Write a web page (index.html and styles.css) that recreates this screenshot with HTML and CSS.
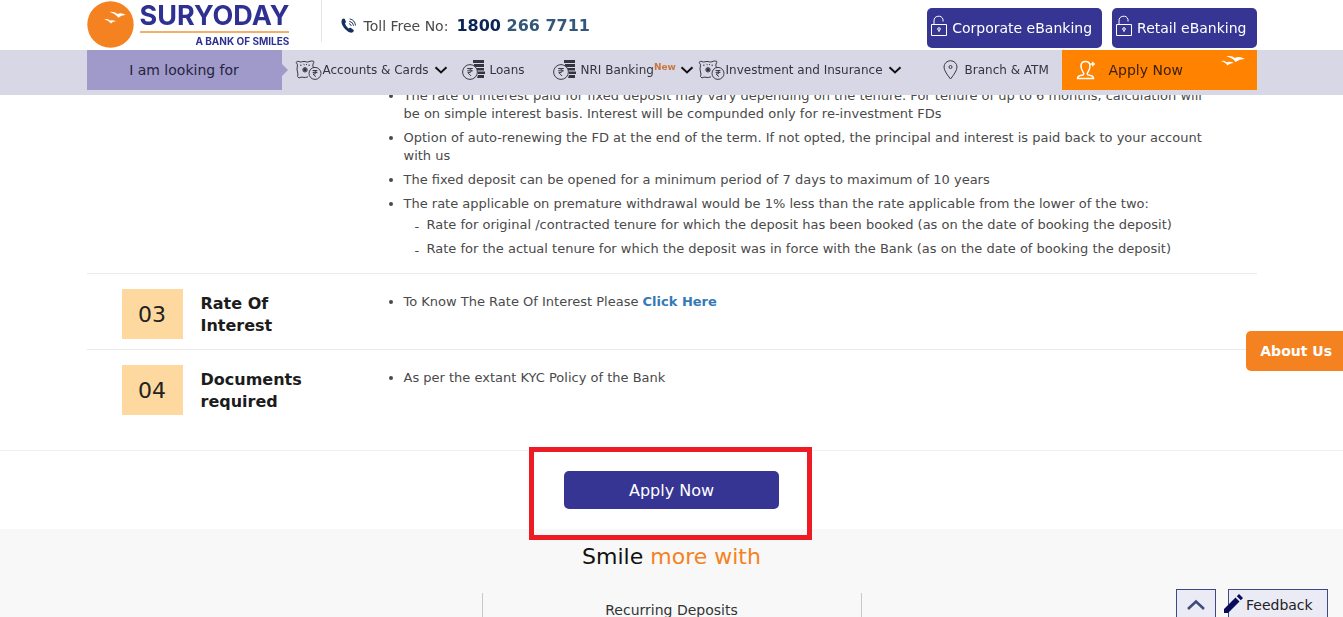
FILE: index.html
```html
<!DOCTYPE html>
<html lang="en">
<head>
    <meta charset="UTF-8" />
    <meta name="viewport" content="width=device-width, initial-scale=1.0"/>
    <title>Fixed Deposit - Suryoday Bank</title>
    <link rel="stylesheet" href="styles.css">
</head>
<body>

<!-- shared icons -->
<svg class="sprite" aria-hidden="true">
    <symbol id="icon-savings" viewBox="0 0 28 20">
        <path d="M1 2.5 Q2 .8 4 1.5 Q5 2.4 7 1.8 Q9 1 11 1.8 Q13 2.5 14 1.6 Q16 .6 18.5 1.2 Q19.5 2 18 4 Q17.5 6 18.5 8 M1 2.5 Q3 4 2.4 6 Q1.5 9 2.5 12 Q3.4 14 2.5 16.5 L4 18 Q6 16.5 8 17.3 Q10 18 13 16.8"/>
        <path d="M5 5.2h1.6M8.5 4.2l1.2.7M12 4.2l-1 .7M15 5.2h-1.6"/>
        <circle cx="10" cy="9.8" r="2.2"/><circle class="solid" cx="10" cy="9.8" r="1.8"/>
        <circle cx="20" cy="13.4" r="6"/>
        <path d="M17.6 10.5h4.8M17.6 12.4h4.8M18 10.5q3.2 0 3.2 1.9t-3.2 1.7l2.9 2.6"/>
    </symbol>
    <symbol id="icon-coins" viewBox="0 0 24 20">
        <path class="solid" d="M11 0h11v3H11zM12 4h10v3H12zM14 8h8v2.5h-8zM16 11.5h7V14h-7zM16 15h6v3h-7z"/>
        <circle class="coin" cx="8" cy="12" r="7.4"/>
        <path d="M5.2 8.5h5.6M5.2 10.8h5.6M5.8 8.5q3.6 0 3.6 2.2t-3.6 2l3.3 3.3"/>
    </symbol>
    <symbol id="icon-chevron" viewBox="0 0 14 8">
        <path class="chevron" d="M1.5 1.2L7 6.4l5.5-5.2"/>
    </symbol>
    <symbol id="icon-lock" viewBox="0 0 18 22">
        <path d="M1.5 9.5h15v11h-15zM4 9.5V6a4.6 4.6 0 0 1 9-1.5v2"/>
        <circle cx="9" cy="14" r="1.3"/><path d="M9 15v2"/>
    </symbol>
    <symbol id="icon-birds" viewBox="0 0 24 12">
        <path d="M5 1.2Q11 .2 14 3Q18 .8 24 4Q19 3.8 14.5 7Q12 2.8 5 1.2zM0 6Q3 5.2 5.5 7.2Q9 5.8 13 8Q8.5 8 6.500 10.5Q4.5 7 0 6z"/>
    </symbol>
</svg>

<header class="site-header">
    <div class="container top-bar">
        <a class="logo" href="#" aria-label="Suryoday home">
            <svg class="logo-sun" viewBox="0 0 46 46">
                <circle cx="23" cy="23" r="22.7"/>
                <path d="M22 10.500q5-.500 8 2.300q3.500-1.800 8 1q-4.500-.200-7.200 2.700q-3-4-8.800-6zM17 17.800q3.500-.500 5.500 1.300q2.500-1 6 .700q-3.500 0-5 2.200q-2-3-6.500-4.200z"/>
            </svg>
            <span class="logo-text">
                <span class="logo-name">SURYODAY</span>
                <span class="logo-tag">A BANK OF SMILES</span>
            </span>
        </a>
        <div class="toll-free">
            <svg class="icon-phone" viewBox="0 0 16 17">
                <path d="M1.5 1.5Q3 .5 4 1.6L5.3 4.5Q5.3 5.5 4.2 6.2Q5 9.5 8 11.7Q9.4 10.7 10.3 11L13.5 13.2Q14 14.5 12.5 15.8Q9 17.2 4.5 12.5Q-1.5 5.5 1.5 1.5z"/>
                <path class="wave" d="M8.5 6.5q2 .3 2.5 2.5M8.8 4q4 .5 4.7 4.8M9.2 1.5q5.5.8 6.3 7"/>
            </svg>
            <span>Toll Free No:</span>
            <a href="tel:18002667711"><b>1800</b> 266 7711</a>
        </div>
        <div class="bank-links">
            <button type="button"><svg class="icon-lock"><use href="#icon-lock"/></svg>Corporate eBanking</button>
            <button type="button"><svg class="icon-lock"><use href="#icon-lock"/></svg>Retail eBanking</button>
        </div>
    </div>
    <nav class="main-nav">
        <div class="container nav-row">
            <a class="looking" href="#">I am looking for</a>
            <div class="nav-items">
                <a href="#"><svg class="icon-savings"><use href="#icon-savings"/></svg>Accounts &amp; Cards<svg class="icon-chevron"><use href="#icon-chevron"/></svg></a>
                <a href="#"><svg class="icon-coins"><use href="#icon-coins"/></svg>Loans</a>
                <a href="#"><svg class="icon-coins"><use href="#icon-coins"/></svg>NRI Banking<span class="new">New</span><svg class="icon-chevron"><use href="#icon-chevron"/></svg></a>
                <a href="#"><svg class="icon-savings"><use href="#icon-savings"/></svg>Investment and Insurance<svg class="icon-chevron"><use href="#icon-chevron"/></svg></a>
                <a href="#"><svg class="icon-pin" viewBox="0 0 15 20"><path d="M7.5 19Q1 11 1 7a6.5 6.3 0 0 1 13 0Q14 11 7.5 19z"/><circle cx="7.5" cy="7" r="1.5"/></svg>Branch &amp; ATM</a>
            </div>
            <a class="apply-link" href="#">
                <svg class="icon-user" viewBox="0 0 20 20"><path d="M1.5 18.5q0-3 5.500-3.500q1.500-1 0-3Q5 9 5 6q0-4.500 4.500-4.500T14 6q0 3-2 6q-1.500 2 0 3q5.500.500 5.500 3.500zM14.500 4h4.500M16.800 1.800v4.500"/></svg>
                Apply Now
                <svg class="icon-birds"><use href="#icon-birds"/></svg>
            </a>
        </div>
    </nav>
</header>

<main>
    <div class="container">
        <section class="detail-row">
            <ul class="detail-list">
                <li>The rate of interest paid for fixed deposit may vary depending on the tenure. For tenure of up to 6 months, calculation will be on simple interest basis. Interest will be compunded only for re-investment FDs</li>
                <li>Option of auto-renewing the FD at the end of the term. If not opted, the principal and interest is paid back to your account with us</li>
                <li>The fixed deposit can be opened for a minimum period of 7 days to maximum of 10 years</li>
                <li>The rate applicable on premature withdrawal would be 1% less than the rate applicable from the lower of the two:
                    <ul class="sub-list">
                        <li>Rate for original /contracted tenure for which the deposit has been booked (as on the date of booking the deposit)</li>
                        <li>Rate for the actual tenure for which the deposit was in force with the Bank (as on the date of booking the deposit)</li>
                    </ul>
                </li>
            </ul>
        </section>
        <section class="detail-row">
            <span class="number">03</span>
            <h2>Rate Of Interest</h2>
            <ul class="detail-list">
                <li>To Know The Rate Of Interest Please <a href="#">Click Here</a></li>
            </ul>
        </section>
        <section class="detail-row">
            <span class="number">04</span>
            <h2>Documents required</h2>
            <ul class="detail-list">
                <li>As per the extant KYC Policy of the Bank</li>
            </ul>
        </section>
    </div>

    <div class="apply-section">
        <div class="apply-box">
            <button type="button">Apply Now</button>
        </div>
    </div>

    <section class="smile">
        <h3>Smile <span>more with</span></h3>
        <div class="container smile-grid">
            <div></div>
            <a href="#">Recurring Deposits</a>
            <div></div>
        </div>
    </section>
</main>

<button type="button" class="about-us">About Us</button>

<div class="float-buttons">
    <button type="button" class="to-top" aria-label="Back to top">
        <svg viewBox="0 0 18 11"><path d="M1 10l8-7.5L17 10"/></svg>
    </button>
    <button type="button" class="feedback">
        <svg viewBox="0 0 20 20"><path d="M0 16L11.5 4.5l4 4L4 20H0zM12.8 3.2L15 1l4 4-2.2 2.2z"/></svg>
        Feedback
    </button>
</div>

</body>
</html>
```
FILE: styles.css
```css
* { box-sizing: border-box; }
body {
    margin: 0;
    font-family: Verdana, "DejaVu Sans", sans-serif;
    font-size: 13px;
    line-height: 18px;
    color: #4a4a4a;
    background: #fff;
}
a { color: inherit; text-decoration: none; }
button {
    font-family: inherit;
    border: none;
    cursor: pointer;
}
svg { flex: none; }
.sprite { position: absolute; width: 0; height: 0; }
.container {
    max-width: 1170px;
    margin: 0 auto;
}

/* header */
.site-header {
    position: fixed;
    top: 0;
    left: 0;
    right: 0;
    z-index: 10;
    background: #fff;
}
.top-bar {
    display: flex;
    align-items: flex-start;
    height: 50px;
}
.logo {
    display: flex;
    gap: 6px;
    width: 234px;
    height: 42px;
}
.logo-sun { width: 47px; height: 47px; margin-top: 1px; }
.logo-sun circle { fill: #f58220; }
.logo-sun path { fill: #fff; }
.logo-text {
    display: flex;
    flex-direction: column;
    font-family: Inter, sans-serif;
    font-weight: 700;
    color: #2e3192;
}
.logo-name {
    font-size: 27px;
    line-height: 31px;
    border-bottom: 2px solid #f3b06b;
}
.logo-tag {
    font-size: 10px;
    line-height: 16px;
    text-align: right;
}
.toll-free {
    display: flex;
    align-items: center;
    gap: 8px;
    height: 42px;
    padding: 9px 0 0 19px;
    border-left: 1px solid #e5e5e5;
    font-size: 14px;
}
.toll-free a { font-size: 16px; font-weight: bold; color: #34587a; }
.toll-free b { color: #0c2356; }
.icon-phone { width: 15px; height: 17px; fill: #14305c; }
.wave { fill: none; stroke: #14305c; }
.bank-links {
    display: flex;
    gap: 10px;
    margin: 8px 0 0 auto;
}
.bank-links button {
    display: flex;
    align-items: center;
    gap: 4px;
    height: 40px;
    padding: 0 10px 0 3px;
    border-radius: 5px;
    background: #363594;
    color: #fff;
    font-size: 14px;
}
.icon-lock {
    width: 18px;
    height: 22px;
    margin-bottom: 4px;
    fill: none;
    stroke: #fff;
}
.main-nav { height: 45px; background: #d8d7e5; }
.nav-row { display: flex; height: 40px; }
.looking, .apply-link {
    display: flex;
    align-items: center;
    width: 195px;
    font-size: 14px;
}
.looking {
    position: relative;
    justify-content: center;
    background: #a09acb;
    color: #25233c;
}
.looking::after {
    content: "";
    position: absolute;
    left: 100%;
    top: 14px;
    border: 6px solid transparent;
    border-left-color: #a09acb;
    border-right: none;
}
.nav-items {
    flex: 1;
    display: grid;
    grid-template-columns: 167fr 91fr 145fr 245fr 119fr;
    padding-left: 13px;
    font-size: 12px;
    color: #34343f;
}
.nav-items a {
    display: flex;
    align-items: center;
    white-space: nowrap;
}
.nav-items svg { fill: none; stroke: #3b3b45; }
.icon-savings { width: 28px; height: 20px; }
.icon-coins { width: 24px; height: 20px; margin-right: 4px; }
.icon-coins ~ .icon-chevron { margin-left: 4px; }
.icon-pin { width: 15px; height: 20px; margin-right: 7px; }
.icon-chevron { width: 14px; height: 8px; margin-left: 5px; }
.chevron { stroke: #111; stroke-width: 2; }
.solid { fill: #34343f; stroke: none; }
.coin { fill: #d8d7e5; }
.new {
    align-self: flex-start;
    margin-top: 8px;
    font-size: 9px;
    font-weight: bold;
    color: #c9773f;
}
.apply-link {
    gap: 13px;
    padding-left: 14px;
    background: #ff8200;
    color: #3c2110;
}
.icon-user { width: 20px; height: 20px; fill: none; stroke: #fff; stroke-width: 1.5; }
.icon-birds {
    width: 24px;
    height: 12px;
    align-self: flex-start;
    margin: 5px 12px 0 auto;
    fill: #fff;
}

/* product details */
main { padding-top: 87px; }
.detail-row {
    display: flex;
    align-items: flex-start;
    padding: 15px 35px 10px;
    border-bottom: 1px solid #ebebeb;
}
.detail-row:first-child { padding-top: 0; padding-bottom: 9px; }
.detail-row:last-child { padding-bottom: 35px; border-bottom: none; }
.number {
    width: 61px;
    height: 50px;
    margin-right: 18px;
    padding-top: 1px;
    background: #fdd9a0;
    color: #222;
    font-size: 22px;
    line-height: 50px;
    text-align: center;
}
.detail-row h2 {
    width: 120px;
    margin: 4px 0 0;
    font-size: 16px;
    line-height: 22px;
    color: #1c1c1c;
}
.detail-list {
    width: 818px;
    margin: 0 0 0 auto;
    padding: 4px 8px 0 0;
}
.detail-row:first-child .detail-list { padding-top: 0; }
.detail-list li { margin-bottom: 6px; }
.detail-list a { font-weight: bold; color: #337ab7; }
.sub-list {
    margin: 3px 0 0;
    padding-left: 23px;
    list-style: none;
}
.sub-list li::before {
    content: "-";
    float: left;
    margin: 2px 0 0 -12px;
}

/* apply */
.apply-section {
    padding: 20px 0;
    border-top: 1px solid #f0f0f0;
}
.apply-box {
    position: relative;
    width: 215px;
    margin: 0 auto;
}
.apply-box::after {
    content: "";
    position: absolute;
    inset: -24px -33px -31px -35px;
    border: 5px solid #ed1c24;
    pointer-events: none;
}
.apply-box button {
    display: block;
    width: 100%;
    height: 38px;
    border-radius: 5px;
    background: #363594;
    color: #fff;
    font-size: 16px;
}

/* smile more with */
.smile { background: #f8f8f8; }
.smile h3 {
    margin: 0;
    padding: 13px 0 21px;
    font-size: 22px;
    font-weight: normal;
    line-height: 30px;
    text-align: center;
    color: #111;
}
.smile h3 span { color: #f58220; }
.smile-grid {
    display: grid;
    grid-template-columns: 1fr 380px 1fr;
}
.smile-grid a {
    padding: 8px 0;
    border: solid #c8c8c8;
    border-width: 0 1px;
    font-size: 14px;
    text-align: center;
    color: #333;
}

/* floating buttons */
.about-us {
    position: fixed;
    right: 0;
    top: 331px;
    height: 40px;
    padding: 0 11px 0 14px;
    border-radius: 5px 0 0 5px;
    background: #f58220;
    color: #fff;
    font-size: 14px;
    font-weight: bold;
}
.float-buttons {
    position: fixed;
    right: 15px;
    bottom: -4px;
    display: flex;
    gap: 12px;
}
.float-buttons button {
    height: 32px;
    border: 1px solid #3f4a85;
    background: #ebebf5;
}
.to-top { width: 40px; padding: 0; }
.to-top svg {
    width: 18px;
    height: 11px;
    fill: none;
    stroke: #3f4a7c;
    stroke-width: 2.5;
}
.feedback {
    display: flex;
    align-items: center;
    gap: 2px;
    width: 100px;
    padding: 0;
    color: #222;
    font-size: 14px;
}
.feedback svg { width: 20px; height: 20px; margin: -4px 0 0 -5px; fill: #0b0b5c; }
```
